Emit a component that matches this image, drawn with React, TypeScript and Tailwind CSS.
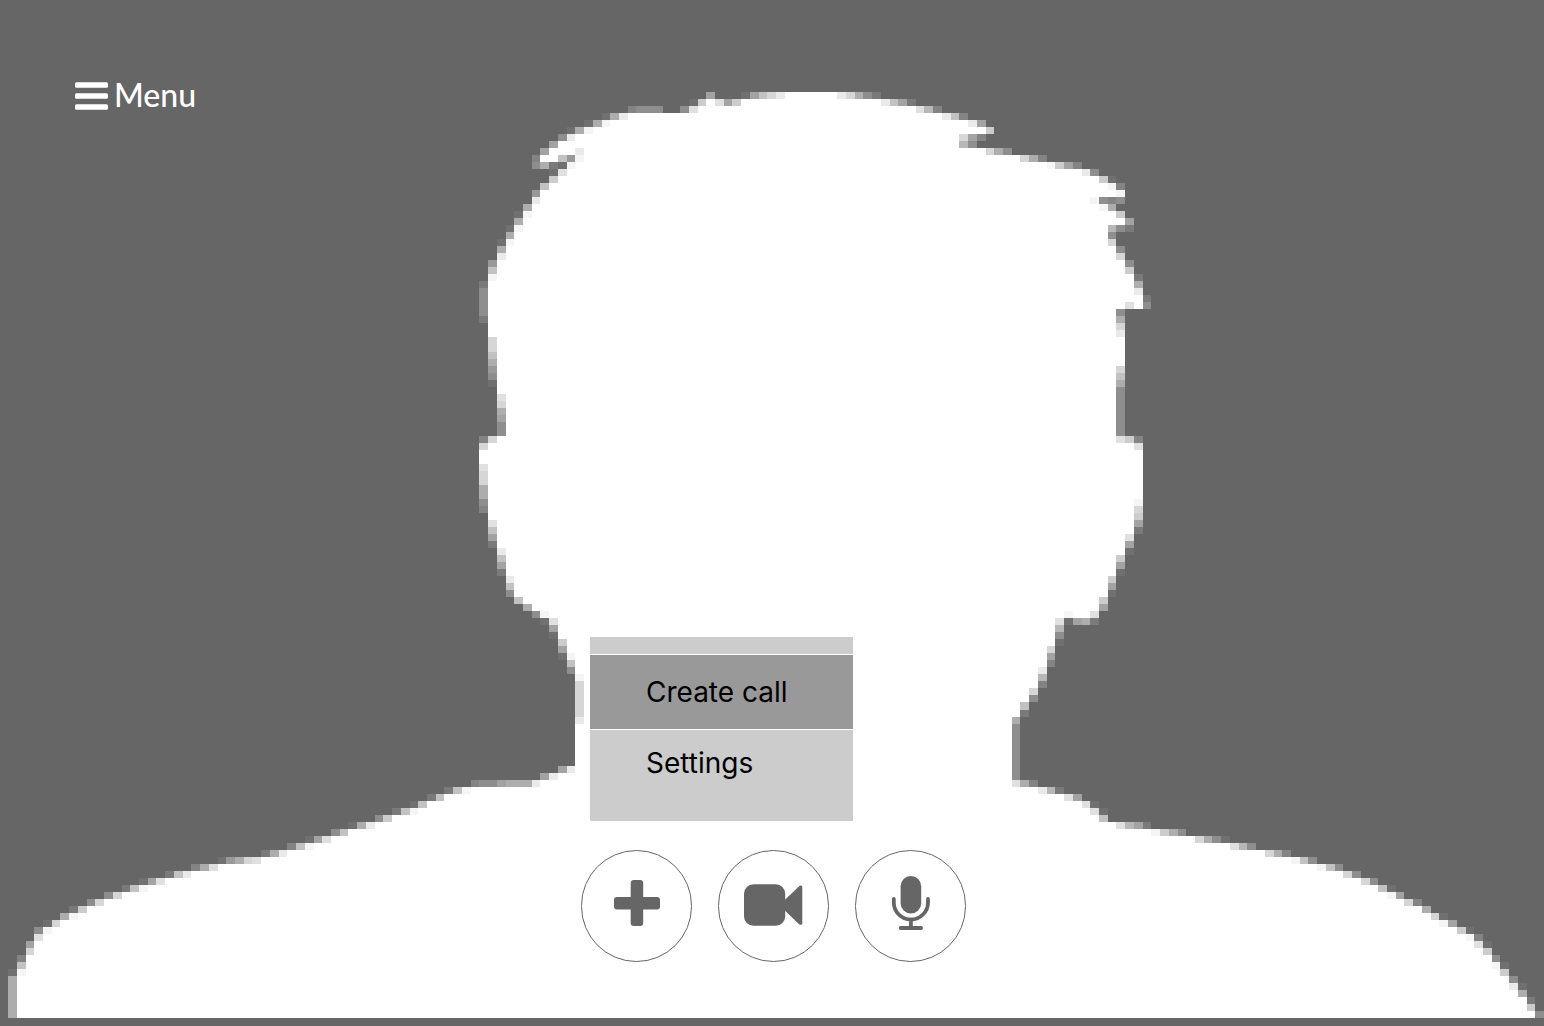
type Row = [left: number, leftShades: string, right: number, rightShades: string, repeat?: number];

const COLS = 177;
const FIRST_ROW = 13;

// Each row is solid between its two ragged edges. The shades are one hex digit
// per cell, f being fully white.
const SILHOUETTE: Row[] = [
  [81, "6000169bd", 96, "db742"],
  [79, "1afc6a", 101, "d962"],
  [72, "3444004c", 105, "c83"],
  [69, "17d", 108, "d93"],
  [67, "17e", 111, "d6"],
  [65, "17e", 113, "a"],
  [64, "4d", 110, "b63"],
  [63, "6", 110, "84"],
  [62, "6fffd", 113, "b74"],
  [61, "3ff95e", 117, "b73"],
  [61, "4721e", 120, "ea63"],
  [63, "1c", 124, "d4"],
  [63, "a", 126, "a1"],
  [62, "9", 127, "e3"],
  [61, "5", 128, "e"],
  [61, "d", 125, "e434"],
  [60, "7", 126, "e7"],
  [59, "1e", 128, "a"],
  [59, "7", 129, "6"],
  [58, "1e", 127, "842"],
  [58, "7", 127, "4"],
  [57, "1e", 127, "b"],
  [57, "7", 128, "4"],
  [57, "d", 128, "b"],
  [56, "5", 129, "4"],
  [56, "9", 129, "a"],
  [56, "e", 130, "2"],
  [55, "2", 130, "7"],
  [55, "4", 130, "d"],
  [55, "4", 131, "2"],
  [55, "4", 129, "cf4"],
  [55, "4", 128, "4"],
  [55, "2", 128, "7"],
  [56, "", 128, "b"],
  [56, "", 128, "d"],
  [56, "b", 129, "", 2],
  [56, "9", 129, ""],
  [56, "7", 129, ""],
  [56, "5", 128, "b"],
  [56, "4", 128, "9"],
  [56, "1", 128, "7"],
  [57, "", 128, "4"],
  [57, "c", 128, "4"],
  [57, "b", 128, "4"],
  [57, "7", 128, "4"],
  [57, "6", 128, "4"],
  [57, "4", 128, "4", 2],
  [55, "3b", 128, "ca3"],
  [55, "b", 130, "c"],
  [55, "f", 131, "", 2],
  [55, "c", 131, ""],
  [55, "b", 131, "", 2],
  [55, "7", 131, "", 2],
  [55, "4", 130, "e"],
  [55, "3", 130, "b"],
  [56, "", 130, "a"],
  [56, "c", 130, "6"],
  [56, "9", 130, "2"],
  [56, "6", 129, "c"],
  [56, "2", 129, "6"],
  [57, "d", 129, "1"],
  [57, "9", 128, "a"],
  [57, "6", 128, "6"],
  [57, "2", 128, "1"],
  [58, "d", 127, "a"],
  [58, "9", 127, "6"],
  [58, "4", 127, "1"],
  [59, "9", 126, "a"],
  [60, "7", 126, "6"],
  [61, "4e", 122, "effc"],
  [62, "1c", 121, "c1672"],
  [63, "6", 121, "8"],
  [63, "1", 121, "4"],
  [64, "a", 121, "1"],
  [64, "6", 120, "b"],
  [64, "1e", 120, "6"],
  [65, "9", 120, "3"],
  [65, "4", 119, "d"],
  [66, "e", 119, "8"],
  [66, "b", 119, "3"],
  [66, "b", 118, "b"],
  [66, "b", 118, "4"],
  [66, "b", 117, "9"],
  [66, "b", 117, "2"],
  [66, "d", 116, "7"],
  [66, "", 116, "4", 6],
  [64, "6d", 116, "4"],
  [62, "6d", 116, "4"],
  [54, "3446777d", 116, "c73"],
  [51, "29e", 119, "d82"],
  [49, "29", 122, "c6"],
  [47, "19", 124, "c1"],
  [45, "29e", 125, "c1"],
  [43, "4a", 126, "9"],
  [40, "17d", 128, "c862"],
  [38, "49", 132, "ea74"],
  [35, "16c", 137, "b741"],
  [33, "39e", 141, "c84"],
  [30, "27d", 145, "b73"],
  [25, "157bc", 148, "e94"],
  [22, "37c", 151, "e94"],
  [19, "29d", 154, "b4"],
  [16, "16c", 156, "b4"],
  [14, "29e", 158, "91"],
  [12, "4b", 159, "e6"],
  [10, "4b", 161, "b3"],
  [8, "2a", 163, "7"],
  [7, "7e", 164, "b1"],
  [5, "1b", 165, "e6"],
  [4, "4e", 167, "a1"],
  [4, "c", 168, "e3"],
  [3, "6", 169, "c1"],
  [3, "b", 170, "a"],
  [2, "3", 171, "4"],
  [2, "9", 171, "e1"],
  [1, "1e", 172, "a"],
  [1, "7", 173, "4"],
  [1, "7", 173, "d1"],
  [1, "7", 174, "7"],
  [1, "7", 175, "2"],
  [1, "7", 175, "a"],
  [1, "7", 176, "4"],
];

function Silhouette() {
  const cells: React.ReactNode[] = [];
  let y = FIRST_ROW;

  for (const [left, leftShades, right, rightShades, repeat = 1] of SILHOUETTE) {
    const solid = left + leftShades.length;
    const shade = (start: number, shades: string) =>
      [...shades].forEach((digit, i) => {
        cells.push(
          <rect
            key={`${y}-${start + i}`}
            x={start + i}
            y={y}
            width={1}
            height={repeat}
            fillOpacity={parseInt(digit, 16) / 15}
          />
        );
      });

    shade(left, leftShades);
    cells.push(<rect key={y} x={solid} y={y} width={right - solid} height={repeat} />);
    shade(right, rightShades);
    y += repeat;
  }

  return (
    <svg
      className="absolute inset-0 h-full w-full"
      viewBox={`0.07 -0.08 ${COLS - 0.08} 146.17`}
      preserveAspectRatio="none"
      shapeRendering="crispEdges"
      fill="#fff"
      aria-hidden="true"
    >
      {cells}
    </svg>
  );
}

function BarsIcon() {
  return (
    <svg className="h-7 w-[34px]" viewBox="0 0 34 28" fill="currentColor" aria-hidden="true">
      <rect x="1" y="0.2" width="33" height="5.6" rx="1.5" />
      <rect x="1" y="11.2" width="33" height="5.6" rx="1.5" />
      <rect x="1" y="22.2" width="33" height="5.6" rx="1.5" />
    </svg>
  );
}

function PlusIcon() {
  return (
    <svg className="size-16" viewBox="0 0 64 64" fill="currentColor" aria-hidden="true">
      <rect x="9" y="23" width="46" height="12.5" rx="3" />
      <rect x="25.7" y="6" width="12.5" height="46" rx="3" />
    </svg>
  );
}

function VideoIcon() {
  return (
    <svg className="size-16" viewBox="0 0 64 64" fill="currentColor" aria-hidden="true">
      <rect x="2" y="10.2" width="41.2" height="41.6" rx="9.5" />
      <path d="M42.5 26.2 57.1 12.2C58.3 11 60.3 11.6 60.3 13.2V49.3C60.3 50.8 58.3 51.4 57.1 50.2L42.5 36.2Z" />
    </svg>
  );
}

function MicIcon() {
  return (
    <svg className="size-16" viewBox="0 0 64 64" fill="currentColor" aria-hidden="true">
      <rect x="21.6" y="2" width="20.6" height="37.5" rx="10.3" />
      <path
        d="M14.8 24.8V28.4A17.1 17.1 0 0 0 49 28.4V24.8M31.9 45.5V54M21.7 54H42.1"
        fill="none"
        stroke="currentColor"
        strokeWidth="3.8"
        strokeLinecap="round"
      />
    </svg>
  );
}

const controls = [
  { label: "Add", Icon: PlusIcon },
  { label: "Camera", Icon: VideoIcon },
  { label: "Microphone", Icon: MicIcon },
];

export default function App() {
  return (
    <main className="relative min-h-screen bg-[#666666] font-['Lato',sans-serif]">
      <Silhouette />

      <div className="relative flex min-h-screen flex-col justify-between">
        <header className="px-[74px] pt-[72px]">
          <button type="button" className="flex h-12 items-center gap-1.5 text-white">
            <BarsIcon />
            <span className="pb-0.5 text-[32px] leading-8 font-medium">Menu</span>
          </button>
        </header>

        <footer className="flex justify-center pb-16 pl-[3px]">
          <div>
            {/* Popup */}
            <div className="mb-[29px] ml-[9px] w-[263px] bg-[#cccccc] pt-[17px] pb-[26px] font-['Inter',sans-serif] text-[28px] leading-8 text-black">
              <button
                type="button"
                className="flex h-[76px] w-full items-center border-y border-white bg-[#999999] pl-14"
              >
                Create call
              </button>
              <button type="button" className="flex h-[65px] w-full items-center pl-14">
                Settings
              </button>
            </div>

            {/* Call controls */}
            <div className="flex gap-[26px]">
              {controls.map(({ label, Icon }) => (
                <button
                  key={label}
                  type="button"
                  aria-label={label}
                  className="flex h-[112px] w-[111px] items-center justify-center rounded-full border border-[#666666] bg-white text-[#666666]"
                >
                  <Icon />
                </button>
              ))}
            </div>
          </div>
        </footer>
      </div>
    </main>
  );
}
